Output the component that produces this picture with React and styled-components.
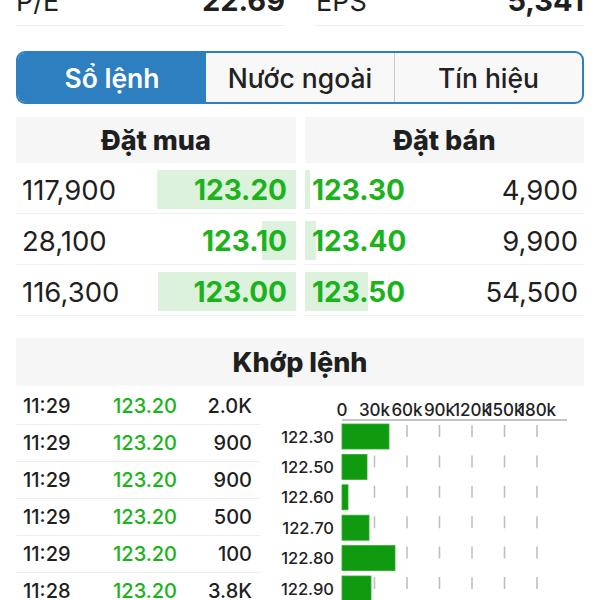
import React from "react";
import styled, { createGlobalStyle } from "styled-components";

const Global = createGlobalStyle`
  html, body { margin: 0; padding: 0; background: #ffffff; }
  body { font-family: Inter, "Noto Sans", "Liberation Sans", sans-serif; color: #1f1f1f; overflow: hidden; }
`;

const GREEN = "#1bb31b";
const BAR_BG = "#dcf2dc";

const Page = styled.div`
  width: 600px;
  height: 600px;
  padding: 0 16px;
  box-sizing: border-box;
  overflow: hidden;
`;

const StatRow = styled.div`
  display: grid;
  grid-template-columns: 269px 268px;
  justify-content: space-between;
  margin-top: -13px;
`;

const StatCell = styled.div`
  display: flex;
  justify-content: space-between;
  align-items: baseline;
  line-height: 28px;
  padding-bottom: 9px;
  border-bottom: 1px solid #efefef;
`;

const StatLabel = styled.span`
  font-size: 27px;
  font-weight: 400;
`;

const StatValue = styled.span`
  font-size: 29px;
  font-weight: 700;
`;

const Tabs = styled.div`
  margin-top: 25px;
  height: 53px;
  display: grid;
  grid-template-columns: repeat(3, 1fr);
  border: 2px solid #2d7fc0;
  border-radius: 9px;
  overflow: hidden;
  box-sizing: border-box;
  background: #f8f8f8;
`;

const Tab = styled.div`
  display: flex;
  align-items: center;
  justify-content: center;
  font-size: 26.5px;
  font-weight: ${(p) => (p.$active ? 600 : 500)};
  color: ${(p) => (p.$active ? "#ffffff" : "#222222")};
  background: ${(p) => (p.$active ? "#2d7fc0" : "transparent")};
  border-left: ${(p) => (p.$divider ? "1.5px solid #c8c8c8" : "none")};
`;

const Book = styled.div`
  margin-top: 13px;
  display: grid;
  grid-template-columns: 280px 279px;
  justify-content: space-between;
`;

const BookSide = styled.div`
  display: flex;
  flex-direction: column;
`;

const SectionHeader = styled.div`
  height: ${(p) => p.$h || 46}px;
  display: flex;
  align-items: center;
  justify-content: center;
  background: #f6f6f6;
  font-size: 27px;
  font-weight: 800;
  color: #1f1f1f;
`;

const BookRow = styled.div`
  padding: 7px 0 4px;
  border-bottom: 1px solid #f0f0f0;
  &:first-of-type { margin-top: 1px; }
`;

const BookCell = styled.div`
  height: 39px;
  display: flex;
  align-items: center;
  justify-content: space-between;
  padding: ${(p) => (p.$side === "buy" ? "0 9px 0 6px" : "0 6px 0 7px")};
  background: linear-gradient(
    ${(p) => (p.$side === "buy" ? "to left" : "to right")},
    ${BAR_BG} 0,
    ${BAR_BG} ${(p) => p.$fill}px,
    transparent ${(p) => p.$fill}px
  );
`;

const Qty = styled.span`
  font-size: 27.5px;
  font-weight: 400;
  color: #1f1f1f;
`;

const BookPrice = styled.span`
  font-size: 28px;
  font-weight: 700;
  color: ${GREEN};
`;

const Match = styled.div`
  margin-top: 22px;
`;

const MatchBody = styled.div`
  display: grid;
  grid-template-columns: 244px 304px;
  justify-content: space-between;
`;

const TradeList = styled.div`
  display: flex;
  flex-direction: column;
  margin-top: 2px;
`;

const TradeRow = styled.div`
  height: 36px;
  display: grid;
  grid-template-columns: 90px 1fr auto;
  align-items: center;
  padding: 0 8px 0 7px;
  border-bottom: 1px solid #efefef;
  font-size: 20px;
  font-weight: 500;
`;

const TradePrice = styled.span`
  color: ${GREEN};
`;

const Chart = styled.svg`
  display: block;
  overflow: visible;
  font-family: Inter, "Noto Sans", sans-serif;
`;

const orderBook = {
  buy: [
    { qty: "117,900", price: "123.20", fill: 139 },
    { qty: "28,100", price: "123.10", fill: 34 },
    { qty: "116,300", price: "123.00", fill: 138 },
  ],
  sell: [
    { qty: "4,900", price: "123.30", fill: 5 },
    { qty: "9,900", price: "123.40", fill: 11 },
    { qty: "54,500", price: "123.50", fill: 63 },
  ],
};

const trades = [
  ["11:29", "123.20", "2.0K"],
  ["11:29", "123.20", "900"],
  ["11:29", "123.20", "900"],
  ["11:29", "123.20", "500"],
  ["11:29", "123.20", "100"],
  ["11:28", "123.20", "3.8K"],
];

const volumes = [
  ["122.30", 47],
  ["122.50", 25],
  ["122.60", 6],
  ["122.70", 27],
  ["122.80", 53],
  ["122.90", 29],
  ["123.00", 40],
];

function VolumeChart() {
  const x0 = 62;
  const step = 32.5;
  const ticks = ["0", "30k", "60k", "90k", "120k", "150k", "180k"];
  const rowH = 30.4;
  const top = 38;
  return (
    <Chart width="304" height="230" viewBox="0 0 304 230">
      {ticks.map((t, i) => (
        <text key={t} x={x0 + step * i} y="30" fontSize="17" fontWeight="500" fill="#222" textAnchor="middle">
          {t}
        </text>
      ))}
      <line x1={x0} y1="34" x2="287" y2="34" stroke="#b0b0b0" strokeWidth="1.5" />
      {ticks.slice(1).map((t, i) => (
        <line
          key={t}
          x1={x0 + step * (i + 1)}
          y1={top + 1}
          x2={x0 + step * (i + 1)}
          y2="230"
          stroke="#bdbdbd"
          strokeWidth="1.5"
          strokeDasharray={`12 ${rowH - 12}`}
        />
      ))}
      {volumes.map(([label, w], i) => (
        <g key={label}>
          <text x="54" y={top + rowH * i + 12.5 + 6} fontSize="16.5" fontWeight="500" fill="#222" textAnchor="end">
            {label}
          </text>
          <rect x={x0} y={top + rowH * i} width={w} height="25" fill="#0f9a0f" stroke="#2fae2f" strokeWidth="0.8" />
        </g>
      ))}
    </Chart>
  );
}

export default function App() {
  return (
    <Page>
      <Global />
      <StatRow>
        <StatCell>
          <StatLabel>P/E</StatLabel>
          <StatValue>22.69</StatValue>
        </StatCell>
        <StatCell>
          <StatLabel>EPS</StatLabel>
          <StatValue>5,341</StatValue>
        </StatCell>
      </StatRow>

      <Tabs>
        <Tab $active>Sổ lệnh</Tab>
        <Tab>Nước ngoài</Tab>
        <Tab $divider>Tín hiệu</Tab>
      </Tabs>

      <Book>
        <BookSide>
          <SectionHeader>Đặt mua</SectionHeader>
          {orderBook.buy.map((r) => (
            <BookRow key={r.price}>
              <BookCell $side="buy" $fill={r.fill}>
                <Qty>{r.qty}</Qty>
                <BookPrice>{r.price}</BookPrice>
              </BookCell>
            </BookRow>
          ))}
        </BookSide>
        <BookSide>
          <SectionHeader>Đặt bán</SectionHeader>
          {orderBook.sell.map((r) => (
            <BookRow key={r.price}>
              <BookCell $side="sell" $fill={r.fill}>
                <BookPrice>{r.price}</BookPrice>
                <Qty>{r.qty}</Qty>
              </BookCell>
            </BookRow>
          ))}
        </BookSide>
      </Book>

      <Match>
        <SectionHeader $h={48}>Khớp lệnh</SectionHeader>
        <MatchBody>
          <TradeList>
            {trades.map(([t, p, v], i) => (
              <TradeRow key={i}>
                <span>{t}</span>
                <TradePrice>{p}</TradePrice>
                <span>{v}</span>
              </TradeRow>
            ))}
          </TradeList>
          <VolumeChart />
        </MatchBody>
      </Match>
    </Page>
  );
}
